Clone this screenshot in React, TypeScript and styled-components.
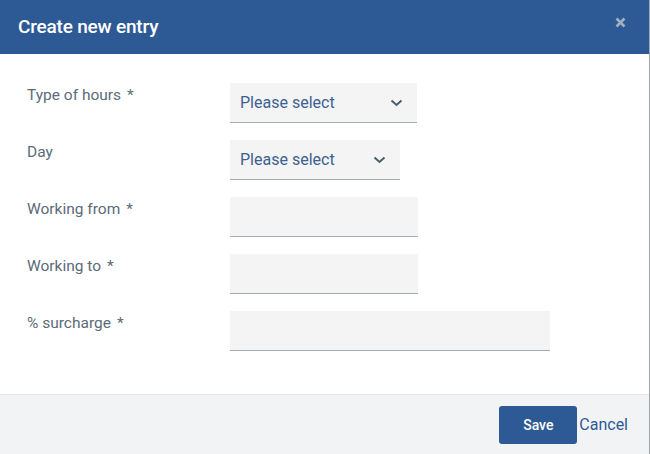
import React from 'react';
import styled, { createGlobalStyle } from 'styled-components';

const GlobalStyle = createGlobalStyle`
  html, body {
    margin: 0;
    padding: 0;
    background: #a3a6a8;
    font-family: Roboto, "Liberation Sans", Arial, sans-serif;
  }
`;

const Dialog = styled.div`
  width: 649px;
  height: 454px;
  background: #ffffff;
  display: flex;
  flex-direction: column;
`;

const Header = styled.div`
  height: 54px;
  background: #2d5a94;
  display: flex;
  align-items: center;
  justify-content: space-between;
  padding: 0 22px 0 18px;
  box-sizing: border-box;
`;

const Title = styled.h1`
  margin: 0;
  font-size: 19px;
  font-weight: 500;
  color: #ffffff;
  letter-spacing: -0.2px;
  margin-top: -1px;
`;

const CloseButton = styled.button`
  border: none;
  background: none;
  padding: 0;
  width: 14px;
  height: 14px;
  display: flex;
  align-items: center;
  justify-content: center;
  margin-top: -10px;
  cursor: pointer;
`;

const Body = styled.div`
  flex: 1;
  padding: 29px 27px 0 27px;
  display: flex;
  flex-direction: column;
  gap: 17px;
`;

const Row = styled.div`
  display: grid;
  grid-template-columns: 203px auto;
  align-items: start;
`;

const Label = styled.label`
  font-size: 15.5px;
  color: #5b6b78;
  line-height: 18px;
  padding-top: 3px;
  span {
    margin-left: 6px;
  }
`;

const Field = styled.div<{ $width: number }>`
  width: ${p => p.$width}px;
  height: 40px;
  background: #f4f4f4;
  border-bottom: 1px solid #a3adb8;
  box-sizing: border-box;
  display: flex;
  align-items: center;
  justify-content: space-between;
  padding: 0 14px 0 10px;
`;

const SelectText = styled.span`
  font-size: 16px;
  color: #3d6191;
`;

const Footer = styled.div`
  height: 59px;
  background: #f2f3f5;
  border-top: 1px solid #e2e4e6;
  display: flex;
  align-items: center;
  justify-content: flex-end;
  padding-right: 21px;
  gap: 2px;
`;

const SaveButton = styled.button`
  width: 78px;
  height: 38px;
  background: #2d5a94;
  color: #ffffff;
  border: none;
  border-radius: 3px;
  font-family: Roboto, "Liberation Sans", Arial, sans-serif;
  font-size: 14px;
  font-weight: 500;
  margin-top: 1px;
  margin-left: 1px;
  cursor: pointer;
`;

const CancelLink = styled.button`
  border: none;
  background: none;
  padding: 0;
  color: #2d5a94;
  font-family: Roboto, "Liberation Sans", Arial, sans-serif;
  font-size: 16px;
  cursor: pointer;
`;

const Chevron = () => (
  <svg width="13" height="8" viewBox="0 0 13 8">
    <path d="M1.5 1.5 L6.5 6 L11.5 1.5" fill="none" stroke="#4b5d6e" strokeWidth="2" />
  </svg>
);

const rows = [
  { label: 'Type of hours', required: true, select: true, width: 187 },
  { label: 'Day', required: false, select: true, width: 170 },
  { label: 'Working from', required: true, select: false, width: 188 },
  { label: 'Working to', required: true, select: false, width: 188 },
  { label: '% surcharge', required: true, select: false, width: 320 },
];

export default function App() {
  return (
    <>
      <GlobalStyle />
      <Dialog>
        <Header>
          <Title>Create new entry</Title>
          <CloseButton aria-label="Close">
            <svg width="11" height="11" viewBox="0 0 11 11">
              <path d="M1.5 1.5 L9.5 9.5 M9.5 1.5 L1.5 9.5" stroke="#9fb0c2" strokeWidth="2.6" />
            </svg>
          </CloseButton>
        </Header>
        <Body>
          {rows.map(r => (
            <Row key={r.label}>
              <Label>
                {r.label}
                {r.required && <span>*</span>}
              </Label>
              <Field $width={r.width}>
                {r.select && (
                  <>
                    <SelectText>Please select</SelectText>
                    <Chevron />
                  </>
                )}
              </Field>
            </Row>
          ))}
        </Body>
        <Footer>
          <SaveButton>Save</SaveButton>
          <CancelLink>Cancel</CancelLink>
        </Footer>
      </Dialog>
    </>
  );
}
